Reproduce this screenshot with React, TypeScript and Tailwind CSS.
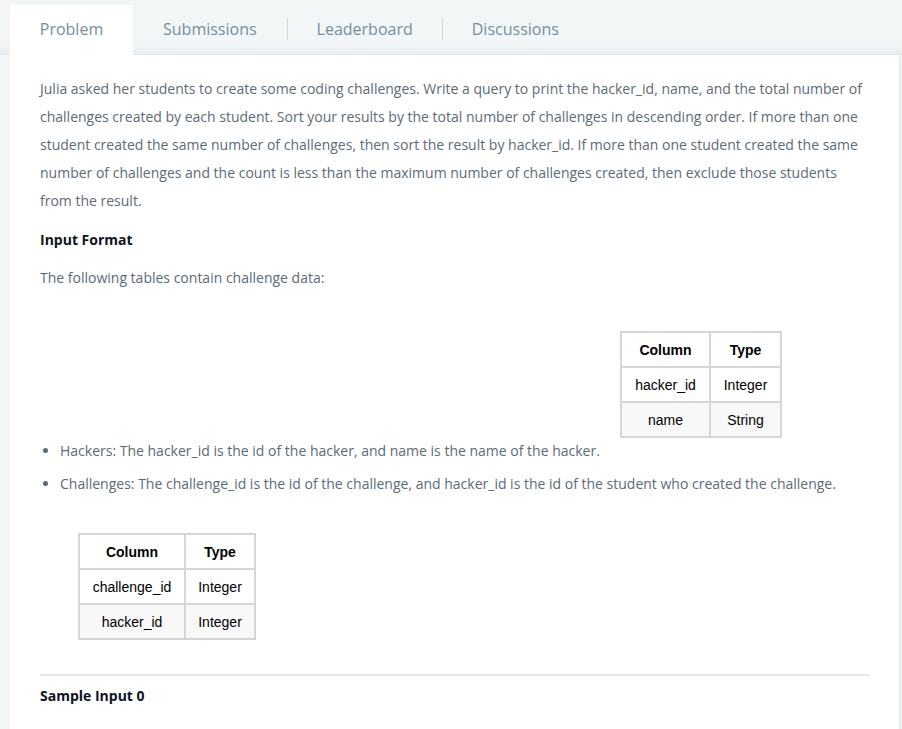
export default function App() {
  const tabs = ['Submissions', 'Leaderboard', 'Discussions'];
  return (
    <div className="min-h-[729px] w-[902px] bg-[#f3f6f7] font-['Open_Sans',sans-serif]">
      {/* tab bar */}
      <div className="flex h-[55px] items-end bg-gradient-to-b from-[#f3f6f7] from-80% to-[#e8ecee] pl-[10px]">
        <div className="flex h-[50px] w-[123px] items-center justify-center pb-[2px] bg-white text-[16px] text-[#738f9e]">
          Problem
        </div>
        <div className="flex h-[50px] items-center pb-[2px]">
          {tabs.map((t, i) => (
            <div key={t} className="flex items-center">
              {i > 0 && <div className="h-[22px] w-px bg-[#cfd6da]" />}
              <div className={`text-[16px] text-[#738f9e] ${i === 0 ? 'pl-[30px] pr-[30px]' : 'px-[29px]'}`}>{t}</div>
            </div>
          ))}
        </div>
      </div>

      {/* content */}
      <div className="ml-[10px] w-[889px] bg-white pl-[30px] pr-[29px] pt-[20px] pb-[30px] text-[14px] leading-[28px] text-[#5b6b78] shadow-[1px_0_2px_rgba(0,0,0,0.08)]">
        <p>
          Julia asked her students to create some coding challenges. Write a query to print the hacker_id, name, and the total number of challenges created by each student. Sort your results by the total number of challenges in descending order. If more than one student created the same number of challenges, then sort the result by hacker_id. If more than one student created the same number of challenges and the count is less than the maximum number of challenges created, then exclude those students from the result.
        </p>
        <h3 className="mt-[11px] font-bold text-[#0e141e]">Input Format</h3>
        <p className="mt-[10px]">The following tables contain challenge data:</p>

        <div className="mt-[39px] flex pl-[580px]">
          <table className="border-collapse border-2 border-[#d6d6d6] font-['Liberation_Sans',Arial,sans-serif] text-[14px] leading-[20px] text-black">
            <thead>
              <tr className="h-[35px]">
                <th className="w-[89px] border-2 border-[#d6d6d6] font-bold">Column</th>
                <th className="w-[71px] border-2 border-[#d6d6d6] font-bold">Type</th>
              </tr>
            </thead>
            <tbody>
              <tr className="h-[35px]">
                <td className="border-2 border-[#d6d6d6] text-center">hacker_id</td>
                <td className="border-2 border-[#d6d6d6] text-center">Integer</td>
              </tr>
              <tr className="h-[35px] bg-[#f8f8f8]">
                <td className="border-2 border-[#d6d6d6] text-center">name</td>
                <td className="border-2 border-[#d6d6d6] text-center">String</td>
              </tr>
            </tbody>
          </table>
        </div>

        <ul className="-mt-px list-disc space-y-[5px] pl-[20px] leading-[28px] marker:text-[#5b6b78]">
          <li>Hackers: The hacker_id is the id of the hacker, and name is the name of the hacker.</li>
          <li>Challenges: The challenge_id is the id of the challenge, and hacker_id is the id of the student who created the challenge.</li>
        </ul>

        <div className="mt-[35px] pl-[38px]">
          <table className="border-collapse border-2 border-[#d6d6d6] font-['Liberation_Sans',Arial,sans-serif] text-[14px] leading-[20px] text-black">
            <thead>
              <tr className="h-[35px]">
                <th className="w-[106px] border-2 border-[#d6d6d6] font-bold">Column</th>
                <th className="w-[70px] border-2 border-[#d6d6d6] font-bold">Type</th>
              </tr>
            </thead>
            <tbody>
              <tr className="h-[35px]">
                <td className="border-2 border-[#d6d6d6] text-center">challenge_id</td>
                <td className="border-2 border-[#d6d6d6] text-center">Integer</td>
              </tr>
              <tr className="h-[35px] bg-[#f8f8f8]">
                <td className="border-2 border-[#d6d6d6] text-center">hacker_id</td>
                <td className="border-2 border-[#d6d6d6] text-center">Integer</td>
              </tr>
            </tbody>
          </table>
        </div>

        <div className="mt-[34px] h-[2px] bg-[#e8e8e8]" />
        <h3 className="mt-[6px] font-bold text-[#0e141e]">Sample Input 0</h3>
      </div>
    </div>
  );
}
